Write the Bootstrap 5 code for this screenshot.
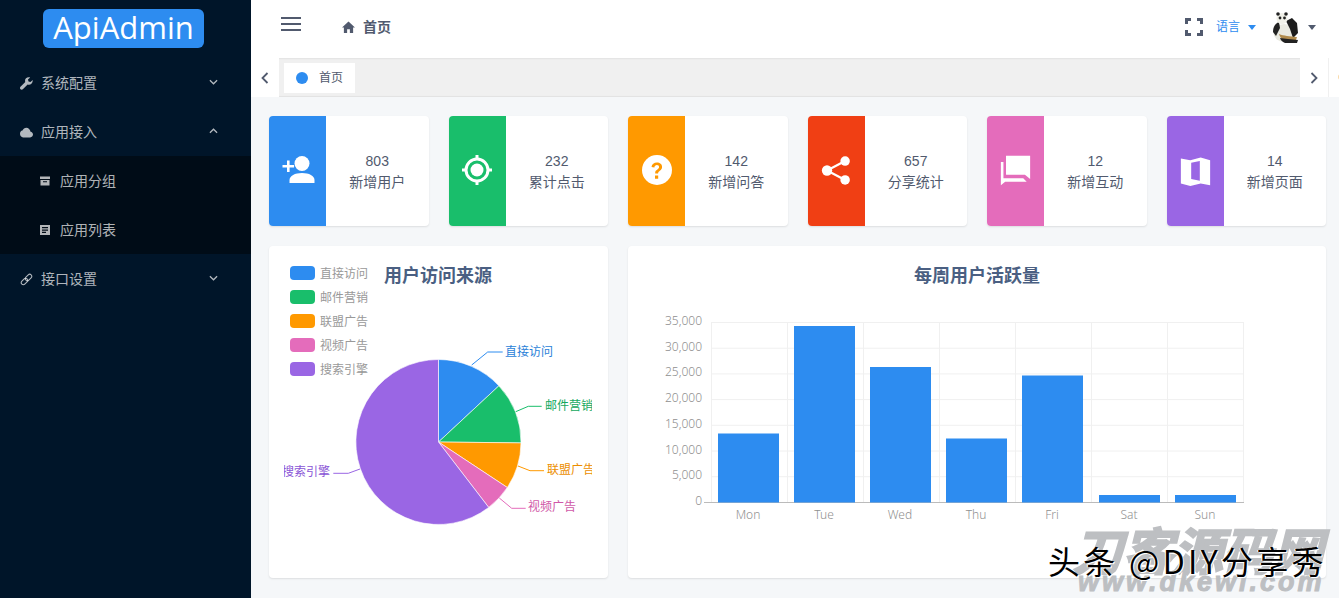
<!DOCTYPE html>
<html lang="zh-CN">
<head>
  <meta charset="UTF-8">
  <title>ApiAdmin</title>
  <meta name="viewport" content="width=device-width, initial-scale=1">
  <link href="https://cdn.jsdelivr.net/npm/bootstrap@5.3.0/dist/css/bootstrap.min.css" rel="stylesheet">
  <style>
    html, body { height: 100%; overflow: hidden; }
    body {
      background: #f5f7f9;
      color: #515a6e;
      font-family: "Liberation Sans", "Noto Sans CJK SC", sans-serif;
      font-size: 14px;
    }
    .app-shell { height: 598px; position: relative; overflow: hidden; }
    .side-bar { width: 251px; background: #001529; flex: none; }
    .logo-wrap { height: 58px; padding: 9px 0 0 43px; }
    .logo-pill {
      width: 161px; height: 39px; background: #2d8cf0; color: #fff; border-radius: 6px;
      font: 31px/37px "Open Sans", sans-serif; text-align: center;
    }
    .menu-row {
      height: 49px; color: rgba(255,255,255,.7); padding: 1px 33px 0 20px;
      display: flex; align-items: center; font-size: 14px; text-decoration: none;
    }
    .menu-row svg.ico { width: 13px; height: 13px; margin-right: 8px; fill: rgba(255,255,255,.7); flex: none; }
    .menu-row .chev { margin-left: auto; width: 9px; height: 6px; fill: none; stroke: rgba(255,255,255,.7); stroke-width: 1.4; margin-top: -2px; }
    .sub-menu { background: #000c17; }
    .sub-menu .menu-row { padding-left: 39px; }
    .sub-menu .menu-row svg.ico { width: 12px; height: 12px; margin-right: 9px; }
    .top-bar { height: 58px; background: #fff; padding: 0 23px 4px 30px; flex: none; }
    .burger { width: 20px; height: 14px; border-top: 2px solid #515a6e; border-bottom: 2px solid #515a6e; position: relative; margin-top: -6px; }
    .burger::after { content: ""; position: absolute; left: 0; right: 0; top: 4px; height: 2px; background: #515a6e; }
    .crumb { margin-left: 41px; font-weight: 700; font-size: 14px; }
    .lang-link { color: #2d8cf0; font-size: 12px; text-decoration: none; }
    .caret-down { width: 0; height: 0; border: 4px solid transparent; border-top: 5px solid currentColor; border-bottom: 0; display: inline-block; }
    .tab-bar { height: 39px; background: #f0f0f0; flex: none; box-shadow: inset 0 1px 2px rgba(0,0,0,.06), inset 0 -1px 1px rgba(0,0,0,.06); }
    .tab-arrow { width: 28px; background: #fff; display: flex; align-items: center; justify-content: center; flex: none; }
    .tab-arrow svg { width: 8px; height: 12px; fill: none; stroke: #515a6e; stroke-width: 1.8; }
    .tab-item { margin: 5px 0 4px 5px; width: 71px; background: #fff; font-size: 12px; display: flex; align-items: center; padding-left: 12px; }
    .tab-dot { width: 12px; height: 12px; background: #2d8cf0; border-radius: 50%; margin-right: 11px; }
    .tab-end { width: 11px; background: #fff; border-left: 1px solid #f0f0f0; flex: none; position: relative; overflow: hidden; }
    .tab-end::after { content: ""; position: absolute; left: 9px; top: 16px; width: 6px; height: 6px; border-radius: 50%; background: #f9d9a6; }
    .main-area { padding: 19px 13px 0 18px; }
    .stat-grid, .chart-grid { --bs-gutter-x: 20px; --bs-gutter-y: 0; }
    .stat-tile {
      height: 110px; background: #fff; border: 0; border-radius: 4px; overflow: hidden;
      box-shadow: 0 1px 2px rgba(0,0,0,.1);
    }
    .stat-icon { width: 57px; flex: none; display: flex; align-items: center; justify-content: center; padding-bottom: 2px; }
    .stat-icon svg { width: 36px; height: 36px; fill: #fff; }
    .stat-icon svg.icon-sm { width: 31px; height: 31px; }
    .stat-text { flex: 1; text-align: center; padding-top: 35px; line-height: 21px; font-size: 14px; }
    .stat-text .num { font-size: 14px; }
    .chart-grid { margin-top: 20px; }
    .chart-box { height: 332px; background: #fff; border: 0; border-radius: 4px; box-shadow: 0 1px 2px rgba(0,0,0,.1); overflow: hidden; }
    .chart-box svg { display: block; width: 100%; height: 100%; }
    .chart-box text { font-family: "Noto Sans", "Noto Sans CJK SC", sans-serif; font-size: 12px; font-weight: 300; }
    .chart-box text.chart-title { font-family: "Liberation Sans", "Noto Sans CJK SC", sans-serif; font-size: 18px; font-weight: 700; fill: #4a5f82; }
    .chart-box .pie-labels text { font-weight: 400; }
    .water-mark { position: absolute; left: 1073px; top: 524px; width: 260px; color: #bdbfc2; pointer-events: none; white-space: nowrap; }
    .water-mark .wm-big { font: italic 700 50px/48px "Noto Sans CJK SC", sans-serif; -webkit-text-stroke: 2px #bdbfc2; }
    .water-mark .wm-url { font: italic 700 27px/20px "Liberation Sans", sans-serif; letter-spacing: 3px; margin-left: 5px; -webkit-text-stroke: 1px #bdbfc2; }
    .toutiao-mark {
      position: absolute; left: 1048px; top: 540px; color: #000; white-space: nowrap; letter-spacing: 3.3px;
      font: 400 32px/40px "Noto Sans CJK SC", sans-serif; text-shadow: 1px 1px 0 #fff, -1px 0 0 #fff;
    }
  </style>
</head>
<body>
<div class="app-shell d-flex">
  <aside class="side-bar">
    <div class="logo-wrap"><div class="logo-pill">ApiAdmin</div></div>
    <nav class="d-flex flex-column">
      <a class="menu-row" href="#">
        <svg class="ico" viewBox="0 0 16 16"><path d="M15.600 3.600l-2.700 2.700-2.400-.7-.7-2.400L12.500.5C10.600-.2 8.600.3 7.400 1.600 6.200 2.800 5.900 4.600 6.500 6.200L.6 12.100c-.8.8-.8 2.100 0 2.900s2.100.8 2.900 0l5.900-5.900c1.600.6 3.400.3 4.600-.9 1.300-1.200 1.800-3.200 1.600-4.600z"/></svg>
        系统配置
        <svg class="chev" viewBox="0 0 10 6"><path d="M1 1l4 4 4-4"/></svg>
      </a>
      <a class="menu-row" href="#">
        <svg class="ico" viewBox="0 0 16 12"><path d="M13 5.100C12.500 2.200 10.400 0 7.800 0 5.700 0 3.900 1.400 3 3.500 1.300 3.800 0 5.400 0 7.500 0 9.900 1.700 12 3.800 12h8.700c1.900 0 3.500-1.600 3.500-3.500 0-1.800-1.300-3.200-3-3.400z"/></svg>
        应用接入
        <svg class="chev" viewBox="0 0 10 6"><path d="M1 5l4-4 4 4"/></svg>
      </a>
      <div class="sub-menu">
        <a class="menu-row" href="#">
          <svg class="ico" viewBox="0 0 12 12"><path d="M1 1.500h10v2.500H1zM1.500 5h9v5.500h-9zM4 6.300v1h4v-1z" fill-rule="evenodd"/></svg>
          应用分组
        </a>
        <a class="menu-row" href="#">
          <svg class="ico" viewBox="0 0 12 12"><path d="M1 1h10v10H1zM3 3v1.300h6V3zM3 5.400v1.300h6V5.400zM3 7.800v1.300h4V7.800z" fill-rule="evenodd"/></svg>
          应用列表
        </a>
      </div>
      <a class="menu-row" href="#">
        <svg class="ico" viewBox="0 0 16 16"><g fill="none" stroke="rgba(255,255,255,.7)" stroke-width="1.300"><rect x="1" y="8" width="9" height="5" rx="2.500" transform="rotate(-45 5.500 10.500)"/><rect x="6" y="3" width="9" height="5" rx="2.500" transform="rotate(-45 10.500 5.500)"/></g></svg>
        接口设置
        <svg class="chev" viewBox="0 0 10 6"><path d="M1 1l4 4 4-4"/></svg>
      </a>
    </nav>
  </aside>

  <div class="flex-grow-1 d-flex flex-column" style="min-width:0">
    <header class="top-bar d-flex align-items-center">
      <div class="burger"></div>
      <div class="crumb d-flex align-items-center gap-2">
        <svg width="13" height="12" viewBox="0 0 14 13" fill="#515a6e"><path d="M7 .5L0 7h2v6h3.500V9h3v4H12V7h2z"/></svg>
        <span>首页</span>
      </div>
      <div class="ms-auto d-flex align-items-center">
        <svg width="18" height="18" viewBox="0 0 18 18" fill="none" stroke="#515a6e" stroke-width="3"><path d="M1.500 6V1.500H6M12 1.500h4.500V6M16.500 12v4.500H12M6 16.500H1.500V12"/></svg>
        <a class="lang-link d-flex align-items-center gap-2" style="margin-left:13px" href="#">语言 <span class="caret-down"></span></a>
        <svg style="margin-left:16px" width="28" height="32" viewBox="0 0 28 32">
          <ellipse cx="12" cy="22" rx="10.500" ry="9" fill="#e9e9e0"/>
          <path d="M1 21c0-6 3-9 6-10l1 6-4 8z" fill="#222"/>
          <path d="M14 10l6-3 5 5 1 10-5 5-3-9z" fill="#1c1c1c"/>
          <circle cx="10" cy="7.500" r="5.500" fill="#f0f0e8"/>
          <circle cx="6" cy="3" r="1.800" fill="#222"/><circle cx="14" cy="3" r="1.800" fill="#222"/>
          <circle cx="8" cy="7" r="1.400" fill="#222"/><circle cx="12.500" cy="7" r="1.400" fill="#222"/>
          <path d="M7 23c5 2 10 2 18 3l-1 3H12c-3-1-4-3-5-6z" fill="#b08a4c"/>
          <path d="M8 27l8 1 10 1-1 3H13c-2-1-4-2-5-5z" fill="#222"/>
        </svg>
        <span class="caret-down ms-2"></span>
      </div>
    </header>

    <div class="tab-bar d-flex">
      <div class="tab-arrow"><svg viewBox="0 0 8 12"><path d="M6.500 1L1.500 6l5 5"/></svg></div>
      <div class="tab-item"><span class="tab-dot"></span>首页</div>
      <div class="tab-arrow ms-auto"><svg viewBox="0 0 8 12"><path d="M1.500 1l5 5-5 5"/></svg></div>
      <div class="tab-end"></div>
    </div>

    <main class="main-area">
      <div class="row stat-grid">
        <div class="col-2"><div class="card stat-tile flex-row">
          <div class="stat-icon" style="background:#2d8cf0"><svg viewBox="0 0 36 36"><circle cx="22" cy="11.500" r="7.500"/><path d="M22 21c-7 0-12.500 2.800-12.500 7v3h25v-3c0-4.200-5.500-7-12.500-7zM7 13v-4.500h2.600V13h4.500v2.600H9.600v4.500H7v-4.500H2.500V13z"/></svg></div>
          <div class="stat-text"><div class="num">803</div>新增用户</div>
        </div></div>
        <div class="col-2"><div class="card stat-tile flex-row">
          <div class="stat-icon" style="background:#19be6b"><svg viewBox="0 0 36 36"><circle cx="18" cy="18" r="6.500"/><path d="M18 5.500a12.500 12.500 0 1 0 0 25 12.500 12.500 0 0 0 0-25zm0 3a9.500 9.500 0 1 1 0 19 9.500 9.500 0 0 1 0-19z" fill-rule="evenodd"/><path d="M16.500 3h3v4h-3zM16.500 29h3v4h-3zM3 16.500h4v3H3zM29 16.500h4v3h-4z"/></svg></div>
          <div class="stat-text"><div class="num">232</div>累计点击</div>
        </div></div>
        <div class="col-2"><div class="card stat-tile flex-row">
          <div class="stat-icon" style="background:#ff9900"><svg viewBox="0 0 36 36"><circle cx="18" cy="18" r="15"/><path fill="#ff9900" d="M16.200 21.500v-1c0-2.600 3.900-3 3.900-5.400 0-1.200-.9-2-2.200-2-1.400 0-2.300.9-2.500 2.300l-2.900-.4c.4-2.800 2.500-4.500 5.400-4.500 3 0 5.200 1.800 5.200 4.400 0 3.500-4 3.900-4 6.200v.4zM16 23.500h3.200v3.200H16z"/></svg></div>
          <div class="stat-text"><div class="num">142</div>新增问答</div>
        </div></div>
        <div class="col-2"><div class="card stat-tile flex-row">
          <div class="stat-icon" style="background:#f03f14"><svg class="icon-sm" viewBox="0 0 36 36"><circle cx="28" cy="7" r="5.500"/><circle cx="28" cy="29" r="5.500"/><circle cx="7" cy="18" r="6"/><path d="M7 18L28 7M7 18l21 11" stroke="#fff" stroke-width="2.600" fill="none"/></svg></div>
          <div class="stat-text"><div class="num">657</div>分享统计</div>
        </div></div>
        <div class="col-2"><div class="card stat-tile flex-row">
          <div class="stat-icon" style="background:#e46cbb"><svg class="icon-sm" viewBox="0 0 36 36"><path d="M7 1h28v27l-6-5H7z"/><path d="M4 8v19h23l4 4H6l-5 4V8z"/></svg></div>
          <div class="stat-text"><div class="num">12</div>新增互动</div>
        </div></div>
        <div class="col-2"><div class="card stat-tile flex-row">
          <div class="stat-icon" style="background:#9a66e4"><svg class="icon-sm" viewBox="0 0 36 36"><path d="M1 4l11 2 12-3 11 3v29l-11-2-12 3-11-3zM13 9v19l10 2V7z" fill-rule="evenodd"/></svg></div>
          <div class="stat-text"><div class="num">14</div>新增页面</div>
        </div></div>
      </div>

      <div class="row chart-grid">
        <div class="col-4"><div class="card chart-box">
          <svg viewBox="0 0 339 332">
            <defs><clipPath id="pieClip"><rect x="15" y="0" width="308" height="332"/></clipPath></defs>
            <text class="chart-title" x="169" y="36" text-anchor="middle">用户访问来源</text>
            <g class="pie-labels" fill="#999">
              <rect x="21" y="20" width="25" height="14" rx="4" fill="#2d8cf0"/><text x="51" y="32">直接访问</text>
              <rect x="21" y="44" width="25" height="14" rx="4" fill="#19be6b"/><text x="51" y="56">邮件营销</text>
              <rect x="21" y="68" width="25" height="14" rx="4" fill="#ff9900"/><text x="51" y="80">联盟广告</text>
              <rect x="21" y="92" width="25" height="14" rx="4" fill="#e46cbb"/><text x="51" y="104">视频广告</text>
              <rect x="21" y="116" width="25" height="14" rx="4" fill="#9a66e4"/><text x="51" y="128">搜索引擎</text>
            </g>
            <g stroke="#fff" stroke-width=".6">
              <path d="M169.500 196V113.500A82.500 82.500 0 0 1 229.900 139.800Z" fill="#2d8cf0"/>
              <path d="M169.500 196L229.900 139.800A82.500 82.500 0 0 1 252 196.900Z" fill="#19be6b"/>
              <path d="M169.500 196L252 196.900A82.500 82.500 0 0 1 238.300 241.500Z" fill="#ff9900"/>
              <path d="M169.500 196L238.300 241.500A82.500 82.500 0 0 1 219.700 261.400Z" fill="#e46cbb"/>
              <path d="M169.500 196L219.700 261.400A82.500 82.500 0 1 1 169.500 113.500Z" fill="#9a66e4"/>
            </g>
            <g fill="none" stroke-width="1">
              <path d="M202.700 119l16-13h15" stroke="#2d8cf0"/>
              <path d="M246.700 165.700l12.600-5.400h13.400" stroke="#19be6b"/>
              <path d="M249 220l12 4.700h14" stroke="#ff9900"/>
              <path d="M230.300 252l12.400 10.300h14" stroke="#e46cbb"/>
              <path d="M91 223l-11.700 4.300h-15" stroke="#9a66e4"/>
            </g>
            <g class="pie-labels" clip-path="url(#pieClip)">
              <text x="236" y="110" fill="#2a7fd8">直接访问</text>
              <text x="276" y="164" fill="#14a85e">邮件营销</text>
              <text x="278" y="228" fill="#ec8e00">联盟广告</text>
              <text x="259" y="265" fill="#d058a8">视频广告</text>
              <text x="61" y="230" fill="#8a55d6" text-anchor="end">搜索引擎</text>
            </g>
          </svg>
        </div></div>
        <div class="col-8"><div class="card chart-box">
          <svg viewBox="0 0 698 332">
            <text class="chart-title" x="349" y="36" text-anchor="middle">每周用户活跃量</text>
            <g stroke="#f0f0f0" stroke-width="1">
              <path d="M83 76.500h533M83 102.200h533M83 127.900h533M83 153.600h533M83 179.300h533M83 205h533M83 230.700h533"/>
              <path d="M83.500 76v180M159.500 76v180M235.500 76v180M311.500 76v180M387.500 76v180M463.500 76v180M539.500 76v180M615.500 76v180"/>
            </g>
            <path d="M76 256.500h540" stroke="#bbb" stroke-width="1"/>
            <g fill="#2d8cf0">
              <rect x="90" y="187.500" width="61" height="69"/>
              <rect x="166" y="80" width="61" height="176.500"/>
              <rect x="242" y="121" width="61" height="135.500"/>
              <rect x="318" y="192.500" width="61" height="64"/>
              <rect x="394" y="129.500" width="61" height="127"/>
              <rect x="471" y="249" width="61" height="7.500"/>
              <rect x="547" y="249" width="61" height="7.500"/>
            </g>
            <g fill="#8f8f8f" text-anchor="end">
              <text x="74" y="79">35,000</text><text x="74" y="105">30,000</text><text x="74" y="130">25,000</text>
              <text x="74" y="156">20,000</text><text x="74" y="182">15,000</text><text x="74" y="208">10,000</text>
              <text x="74" y="233">5,000</text><text x="74" y="259">0</text>
            </g>
            <g fill="#8f8f8f" text-anchor="middle">
              <text x="120" y="273">Mon</text><text x="196" y="273">Tue</text><text x="272" y="273">Wed</text>
              <text x="348" y="273">Thu</text><text x="424" y="273">Fri</text><text x="501" y="273">Sat</text><text x="577" y="273">Sun</text>
            </g>
          </svg>
        </div></div>
      </div>
    </main>
  </div>

  <div class="water-mark">
    <div class="wm-big">刀客源码网</div>
    <div class="wm-url">www.dkewl.com</div>
  </div>
  <div class="toutiao-mark">头条 @DIY分享秀</div>
</div>
<script src="https://cdn.jsdelivr.net/npm/bootstrap@5.3.0/dist/js/bootstrap.bundle.min.js"></script>
</body>
</html>
